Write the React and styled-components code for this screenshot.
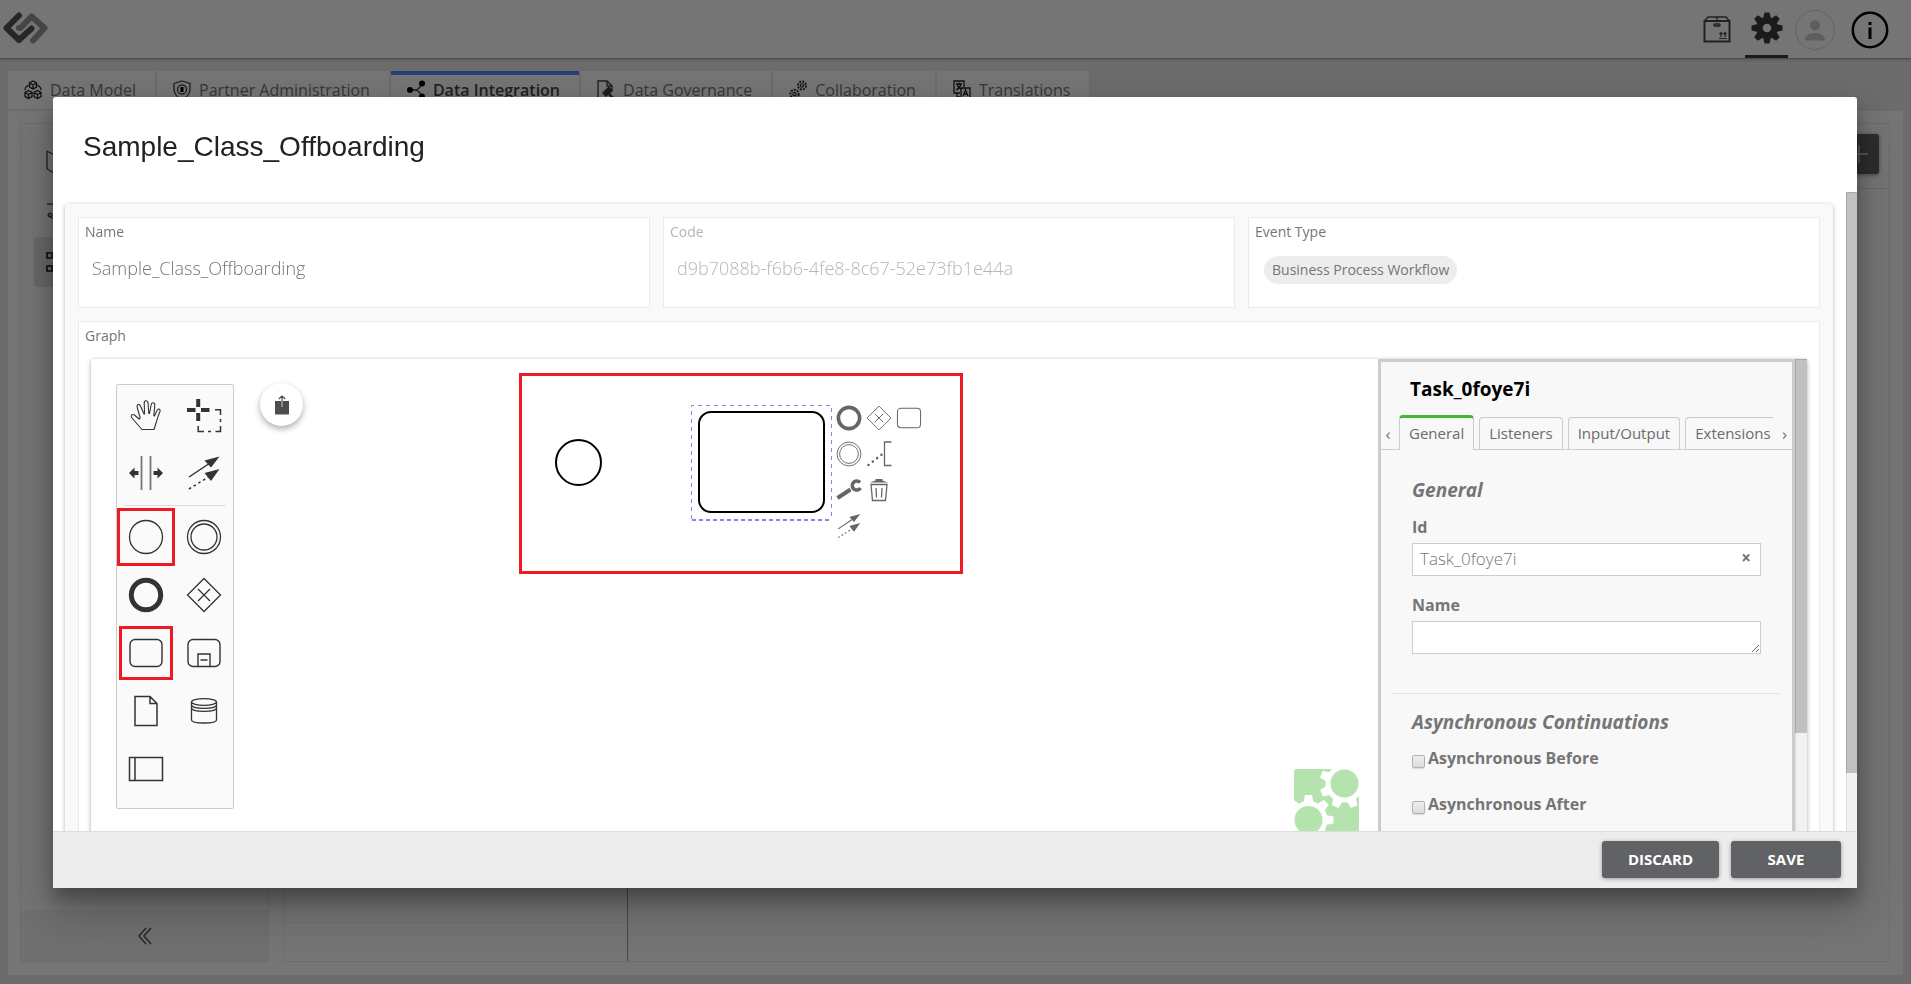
import React from "react";
import styled, { createGlobalStyle, css } from "styled-components";

const GlobalStyle = createGlobalStyle`
  *, *::before, *::after { box-sizing: border-box; }
  html, body { margin: 0; height: 100%; }
  body { background: #ebebeb; overflow: hidden; font-family: "Open Sans", "Noto Sans", sans-serif; color: #6b6b6b; }
  button, input, textarea { font: inherit; color: inherit; }
  svg { display: block; flex: none; }
`;

/* ---------- page behind the dialog ---------- */

const Page = styled.div`
  display: flex;
  flex-direction: column;
  min-height: 100vh;
`;

const Header = styled.header`
  display: flex;
  justify-content: space-between;
  height: 59px;
  background: #fff;
  border-bottom: 1px solid #aaa;
  box-shadow: 0 1px 3px rgba(0, 0, 0, 0.2);
  padding: 0 13px 0 2px;
`;

const Logo = styled.a`
  display: flex;
  align-items: center;
  height: 54px;
`;

const HeaderTools = styled.nav`
  display: flex;
  align-items: flex-start;
  gap: 7px;
`;

const HeaderButton = styled.button`
  display: flex;
  align-items: center;
  justify-content: center;
  width: ${(p) => p.$width || 43}px;
  height: 58px;
  padding: ${(p) => p.$drop || 0}px 0 0;
  background: none;
  border: 0;
  border-bottom: 3px solid ${(p) => (p.$active ? "#3a3a3a" : "transparent")};
`;

const TabBar = styled.nav`
  display: flex;
  gap: 2px;
  padding: 12px 8px 0;
`;

const PageTab = styled.a`
  display: flex;
  align-items: center;
  gap: 8px;
  height: 38px;
  padding: 0 19px 4px 16px;
  background: #fff;
  border-top: 4px solid ${(p) => (p.$active ? "#5389ff" : "transparent")};
  font-size: 16px;
  line-height: 22px;
  font-weight: ${(p) => (p.$active ? 600 : 400)};
  color: ${(p) => (p.$active ? "#444" : "#777")};
  text-decoration: none;
`;

const Workspace = styled.main`
  flex: 1;
  display: flex;
  gap: 14px;
  margin: 2px 8px 9px;
  padding: 12px 13px 13px 12px;
  background: #fff;
`;

const Sidebar = styled.aside`
  display: flex;
  flex-direction: column;
  width: 249px;
  border: 1px solid #ebebeb;
`;

const SideList = styled.div`
  flex: 1;
  display: flex;
  flex-direction: column;
  padding: 13px;
`;

const SideItem = styled.a`
  display: flex;
  align-items: center;
  height: 50px;
  padding-left: 12px;
  border-radius: 4px;
  background: ${(p) => (p.$active ? "#e4e4e4" : "transparent")};
`;

const Collapse = styled.button`
  display: flex;
  align-items: center;
  justify-content: center;
  height: 51px;
  border: 0;
  background: #f3f3f3;
`;

const Results = styled.section`
  flex: 1;
  display: flex;
  flex-direction: column;
  border: 1px solid #ebebeb;
`;

const ResultsBar = styled.div`
  display: flex;
  justify-content: flex-end;
  height: 65px;
  padding: 10px;
  border-bottom: 1px solid #e6e6e6;
`;

const AddButton = styled.button`
  display: flex;
  align-items: center;
  justify-content: center;
  width: 40px;
  height: 40px;
  border: 0;
  border-radius: 3px;
  background: #5f6064;
  box-shadow: 0 1px 4px rgba(0, 0, 0, 0.4);
`;

const ListPane = styled.div`
  flex: 1;
  display: flex;
  flex-direction: column;
  justify-content: flex-end;
  width: 344px;
  border-right: 1px solid #999;
`;

const ListFooter = styled.div`
  height: 39px;
  border-top: 1px solid #f3f3f3;
`;

/* ---------- dialog ---------- */

const Backdrop = styled.div`
  position: fixed;
  inset: 0;
  display: flex;
  padding: 97px 54px 96px 53px;
  background: rgba(0, 0, 0, 0.54);
`;

const Dialog = styled.section`
  flex: 1;
  display: flex;
  flex-direction: column;
  min-width: 0;
  background: #fff;
  border-radius: 3px 3px 0 0;
  box-shadow: 0 12px 18px rgba(0, 0, 0, 0.28), 0 20px 48px 8px rgba(0, 0, 0, 0.2);
`;

const DialogTitle = styled.h1`
  margin: 0;
  height: 95px;
  padding: 33px 30px 0;
  font-family: "Liberation Sans", Arial, sans-serif;
  font-size: 28px;
  line-height: 34px;
  font-weight: 400;
  color: #212121;
`;

const DialogBody = styled.div`
  flex: 1;
  display: flex;
  min-height: 0;
`;

const DialogContent = styled.div`
  flex: 1;
  min-width: 0;
  overflow: hidden;
  padding: 12px 13px 0 12px;
`;

const ScrollTrack = styled.div`
  flex: none;
  width: ${(p) => p.$width}px;
  background: #f1f1f1;
  border-left: 1px solid #ddd;
`;

const ScrollThumb = styled.div`
  height: ${(p) => p.$size};
  margin-left: -1px;
  background: #c1c1c1;
  border: solid #a8a8a8;
  border-width: 1px 0 0 1px;
`;

const Card = styled.div`
  display: grid;
  grid-template-columns: repeat(3, 1fr);
  gap: 13px;
  padding: 13px;
  background: #f9f9f9;
  border-radius: 4px;
  box-shadow: 0 1px 4px rgba(0, 0, 0, 0.3);
`;

const Field = styled.div`
  height: ${(p) => (p.$wide ? "720px" : "91px")};
  grid-column: ${(p) => (p.$wide ? "1 / -1" : "auto")};
  padding: 4px 12px 0;
  background: #fff;
  border: 1px solid #ebebeb;
  color: ${(p) => (p.$muted ? "#b5b5b5" : "#757575")};
`;

const FieldLabel = styled.label`
  display: block;
  margin-left: -6px;
  font-size: 14px;
  line-height: 20px;
`;

const FieldInput = styled.input`
  display: block;
  width: 100%;
  height: 30px;
  margin-top: 11px;
  padding: 0 1px;
  border: 0;
  outline: 0;
  background: none;
  font-size: 18px;
  line-height: 24px;
  font-weight: 300;
`;

const Chip = styled.span`
  display: inline-block;
  margin: 14px 0 0 3px;
  padding: 0 8px;
  border-radius: 14px;
  background: #ededed;
  color: #757575;
  font-size: 14px;
  line-height: 28px;
`;

const Modeler = styled.div`
  display: flex;
  height: 620px;
  margin-top: 13px;
  border-radius: 3px;
  box-shadow: 0 1px 4px rgba(0, 0, 0, 0.35);
`;

const Canvas = styled.div`
  flex: 1;
  position: relative;
  min-width: 0;
`;

const Palette = styled.div`
  position: absolute;
  left: 25px;
  top: 25px;
  display: grid;
  grid-template-columns: 58px 58px;
  grid-auto-rows: 58px;
  grid-template-rows: 58px 58px 6px;
  width: 118px;
  height: 425px;
  padding-top: 1px;
  background: #fafafa;
  border: 1px solid #ccc;
  border-radius: 2px;
`;

const PaletteEntry = styled.button`
  position: relative;
  display: flex;
  align-items: center;
  justify-content: center;
  padding: 0;
  border: 0;
  background: none;
`;

const Highlight = styled.span`
  position: absolute;
  inset: ${(p) => p.$inset}px;
  border: 3px solid #ed1c24;
`;

const Separator = styled.hr`
  grid-column: 1 / -1;
  width: 102px;
  height: 1px;
  margin: 3px auto 0;
  border: 0;
  background: #ddd;
`;

const ShareButton = styled.button`
  position: absolute;
  left: 169px;
  top: 24px;
  display: flex;
  align-items: center;
  justify-content: center;
  width: 43px;
  height: 43px;
  padding: 0;
  border: 0;
  border-radius: 50%;
  background: #fff;
  box-shadow: 0 3px 6px rgba(0, 0, 0, 0.32);
`;

const Diagram = styled.div`
  position: absolute;
  left: 428px;
  top: 14px;
  width: 444px;
  height: 201px;
  border: 3px solid #ed1c24;
`;

const ContextPad = styled.div`
  position: absolute;
  left: 312px;
  top: 24px;
  display: grid;
  grid-template-columns: repeat(3, 30px);
  grid-auto-rows: 36px;
`;

const PadButton = styled.button`
  display: flex;
  align-items: center;
  justify-content: center;
  grid-column: ${(p) => p.$col};
  grid-row: ${(p) => p.$row};
  padding: 0;
  border: 0;
  background: none;
`;

const Watermark = styled.div`
  position: absolute;
  right: 19px;
  top: 410px;
`;

const Properties = styled.aside`
  flex: none;
  width: 417px;
  border: 3px solid #ccc;
  background: #f8f8f8;
  overflow: hidden;
`;

const ElementName = styled.h2`
  margin: 0;
  padding: 14px 29px 0;
  font-size: 19px;
  line-height: 26px;
  font-weight: 700;
  color: #000;
`;

const PropTabs = styled.div`
  display: flex;
  align-items: flex-end;
  height: 35px;
  margin-top: 13px;
  box-shadow: inset 0 -1px #ccc;
`;

const TabArrow = styled.button`
  flex: none;
  width: ${(p) => (p.$next ? 19 : 18)}px;
  height: 32px;
  padding: ${(p) => (p.$next ? "0 0 0 4px" : "0 4px 0 0")};
  border: 0;
  background: none;
  font-size: 17px;
  line-height: 28px;
`;

const TabStrip = styled.div`
  flex: 1;
  display: flex;
  align-items: flex-end;
  gap: 5px;
  overflow: hidden;
`;

const PropTab = styled.a`
  flex: none;
  height: 33px;
  padding: 0 9px;
  border: 1px solid #ccc;
  border-bottom: 0;
  border-radius: 4px 4px 0 0;
  font-size: 15px;
  line-height: 30px;
  color: #6b6b6b;
  text-decoration: none;
  ${(p) =>
    p.$active &&
    css`
      height: 35px;
      border-top: 3px solid #44b534;
      background: #f8f8f8;
    `}
`;

const Group = styled.section`
  margin: 0 12px;
  padding: 0 19px;
  border-bottom: 1px dotted #ccc;
`;

const GroupTitle = styled.h3`
  margin: 0;
  padding-top: ${(p) => p.$top}px;
  font-size: 19px;
  line-height: 26px;
  font-weight: 700;
  font-style: italic;
`;

const PropLabel = styled.label`
  display: block;
  margin-top: ${(p) => p.$top}px;
  font-size: 16px;
  line-height: 22px;
  font-weight: 700;
`;

const InputWrap = styled.div`
  display: flex;
  align-items: center;
  height: 33px;
  margin-top: 5px;
  border: 1px solid #ccc;
  background: #fff;
`;

const PropInput = styled.input`
  flex: 1;
  min-width: 0;
  padding: 0 7px 2px;
  border: 0;
  outline: 0;
  background: none;
  font-size: 17px;
  line-height: 22px;
  font-weight: 300;
`;

const ClearButton = styled.button`
  width: 30px;
  padding: 0 0 4px 2px;
  border: 0;
  background: none;
  font-size: 17px;
  line-height: 22px;
  font-weight: 700;
`;

const PropTextarea = styled.textarea`
  display: block;
  width: 100%;
  height: 33px;
  margin: 5px 0 39px;
  padding: 4px 7px;
  border: 1px solid #ccc;
  border-radius: 0;
  background: #fff;
  font-size: 17px;
  resize: vertical;
  outline: 0;
`;

const CheckRow = styled.div`
  display: flex;
  gap: 3px;
  height: 22px;
  margin: ${(p) => p.$top}px 0 24px;
`;

const Checkbox = styled.input`
  appearance: none;
  width: 13px;
  height: 13px;
  margin: 8px 0 0;
  border: 1px solid #b2b2b2;
  border-radius: 2px;
  background: linear-gradient(#eee, #dcdcdc);
  box-shadow: 0 1px 1px rgba(0, 0, 0, 0.12);
`;

const CheckLabel = styled.label`
  font-size: 16px;
  line-height: 22px;
  font-weight: 700;
`;

const DialogFooter = styled.footer`
  flex: none;
  display: flex;
  justify-content: flex-end;
  gap: 12px;
  height: 57px;
  padding: 9px 16px 0;
  background: #ededed;
  border-top: 1px solid #ddd;
`;

const ActionButton = styled.button`
  width: ${(p) => p.$width}px;
  height: 37px;
  padding: 0 0 2px;
  border: 0;
  border-radius: 3px;
  background: #616266;
  box-shadow: 0 1px 4px rgba(0, 0, 0, 0.35);
  color: #fff;
  font-size: 15px;
  line-height: 20px;
  font-weight: 700;
`;

/* ---------- icons ---------- */

const Svg = ({ w = 18, h = w, box, sw = 1, color = "#333", children }) => (
  <svg
    width={w}
    height={h}
    viewBox={box || `0 0 ${w} ${h}`}
    fill="none"
    stroke={color}
    strokeWidth={sw}
    aria-hidden="true"
  >
    {children}
  </svg>
);

const LogoIcon = () => (
  <Svg w={48} h={34}>
    <g strokeWidth="6" strokeLinecap="round" strokeLinejoin="round">
      <path d="M17 18H18.500L29.500 6.500L42.500 18L31 30.500" stroke="#969696" />
      <path d="M17 5.500L4.500 18L17 30L29.500 18.500" stroke="#565656" />
    </g>
  </Svg>
);

const PackageIcon = () => (
  <Svg w={28} h={28} sw={2} color="#4a4a4a">
    <path d="M1.500 6H26.500V26.500H1.500Z" />
    <path d="M1.500 6L5 2H23L26.500 6M14 2V6" strokeWidth="1.500" />
    <rect x="11" y="9" width="6" height="2" rx="1" strokeWidth="1.500" />
    <path d="M16 23.500h8M18 22v-4.500M22 22v-4.500M16.500 19l1.500-1.500 1.500 1.500M20.500 19l1.500-1.500 1.500 1.500" strokeWidth="1.200" />
  </Svg>
);

const GearIcon = () => (
  <Svg w={32} h={32} color="none">
    <g fill="#3b3b3b">
      {[0, 45, 90, 135, 180, 225, 270, 315].map((a) => (
        <path key={a} d="M12 7L13.500 .5h5L20 7Z" transform={`rotate(${a} 16 16)`} />
      ))}
    </g>
    <circle cx="16" cy="16" r="7.500" stroke="#3b3b3b" strokeWidth="6.500" />
  </Svg>
);

const AvatarIcon = () => (
  <Svg w={40} h={40}>
    <circle cx="20" cy="20" r="19.500" stroke="#d7d7d7" />
    <g fill="#cacaca" stroke="none">
      <circle cx="20" cy="15.500" r="5" />
      <path d="M10 30.500v-1c0-4 5-6.500 10-6.500s10 2.500 10 6.500v1Z" />
    </g>
  </Svg>
);

const InfoIcon = () => (
  <Svg w={38} h={38} color="#000">
    <circle cx="19" cy="19" r="17.200" strokeWidth="2.500" />
    <path d="M19 11v3M19 16.500v11.500" strokeWidth="3" />
  </Svg>
);

const cube = "M0-4L3.500-2V2L0 4L-3.500 2V-2ZM-3.500-2L0 0L3.500-2M0 0V4";

const ModelIcon = () => (
  <Svg w={18} h={20} box="1 0 18 20" color="#222" sw={1.300}>
    <path d={cube} transform="translate(10 5)" />
    <path d={cube} transform="translate(5.500 14.500)" />
    <path d={cube} transform="translate(14.500 14.500)" />
    <path d="M5.500 5Q2 7 2 10M14.500 5Q18 7 18 10" />
  </Svg>
);

const ShieldIcon = () => (
  <Svg w={18} h={20} color="#444" sw={1.300}>
    <path d="M9 1L17 3.500V9c0 5-3.500 8.500-8 10.500C4.500 17.500 1 14 1 9V3.500Z" />
    <circle cx="9" cy="9.500" r="4.500" />
    <path d="M9 7v5" stroke="#000" strokeWidth="3" />
  </Svg>
);

const NodesIcon = () => (
  <Svg w={18} h={20} box="1 0 18 20" color="#333" sw={1.300}>
    <path d="M3 10H10M10 10Q13 9 16 4M10 10Q13 11 16 16" />
    <g fill="#000" stroke="none">
      <circle cx="4" cy="10" r="3" />
      <circle cx="16" cy="3.500" r="3" />
      <circle cx="16" cy="16.500" r="3" />
    </g>
  </Svg>
);

const GovernanceIcon = () => (
  <Svg w={18} h={20} color="#444" sw={1.400}>
    <path d="M6 19H1V1h9l5 5v5M10 1v5h5" />
    <path d="M6 13l6-6 3 4-6 5Z" fill="#444" />
    <path d="M12 14l5 5" strokeWidth="2.500" />
  </Svg>
);

const GearsIcon = () => (
  <Svg w={18} h={20} color="#333" sw={1.200}>
    <circle cx="13" cy="5.500" r="4" strokeDasharray="2 1.100" strokeWidth="2" />
    <circle cx="13" cy="5.500" r="1.600" />
    <circle cx="5.500" cy="14" r="4.200" strokeDasharray="2 1.100" strokeWidth="2" />
    <circle cx="5.500" cy="14" r="1.600" />
  </Svg>
);

const TranslateIcon = () => (
  <Svg w={18} h={20} color="#222" sw={1.300}>
    <path d="M7 13H1V1h10v6M3 4h6M6 2.500V4M8 4q-1 4-5 6M4 4q1 4 5 5" />
    <path d="M8 8h9v11H8ZM10 16l2.500-6L15 16M11 14h3M4 13v4h3" />
  </Svg>
);

const Plus = () => (
  <Svg w={20} color="#cfcfcf" sw={1.500}>
    <path d="M10 1V19M1 10H19" />
  </Svg>
);

const CollapseIcon = () => (
  <Svg w={16} h={18} color="#555" sw={1.500}>
    <path d="M9 1L2 9L9 17M14 1L7 9L14 17" />
  </Svg>
);

const MapIcon = () => (
  <Svg w={24} h={24} color="#111">
    <path d="M1 1l7 4 8-4 7 4v18l-7-4-8 4-7-4ZM8 5v18" />
  </Svg>
);

const FlowIcon = () => (
  <Svg w={24} h={24} color="#111">
    <path d="M1 4h5l4 3M2 14l7 7" />
    <circle cx="4" cy="15" r="2" />
  </Svg>
);

const GridIcon = () => (
  <Svg w={24} h={24} color="#111" sw={1.500}>
    <rect x="1" y="3" width="5" height="5" />
    <rect x="1" y="16" width="5" height="5" />
    <rect x="12" y="3" width="5" height="5" />
  </Svg>
);

const HandIcon = () => (
  <Svg w={36} h={36} sw={1.100}>
    <path
      strokeLinejoin="round"
      d="M14 32.500H26L28 26Q30 19 32 14.500Q32.500 12.300 30.800 12Q29.500 12 29 13.500L26.500 19L25.800 18.500L26.800 8Q26.800 5.700 25 5.700Q23.500 5.700 23.200 7.500L21.500 16.500H20.800L20 5.500Q19.500 3.700 18 3.700Q16.200 3.700 16.200 6L16.600 17L16 17L12.500 9Q11.500 7 10 7.500Q8.500 8.300 9.200 10.500L12.200 21L11 22L6.500 18Q5 17 3.600 18Q2.500 19.300 4 21L10 28Z"
    />
  </Svg>
);

const LassoIcon = () => (
  <Svg w={36} h={36}>
    <path d="M1 13H9.500M15 13H23.500M12.200 2V10M12.200 16V24" strokeWidth="4" />
    <path d="M29 12.700H34.500V18M34.500 22V25M34.500 29V34.500H29.500M25 34.500H22M18 34.500H12.200V29" strokeWidth="1.500" />
  </Svg>
);

const SpaceIcon = () => (
  <Svg w={36} h={36}>
    <path d="M13.500 1V35M22.500 1V35" stroke="#777" strokeWidth="1.800" />
    <path d="M1 18L6.500 12.500V16H10.500V20H6.500V23.500ZM35 18L29.500 12.500V16H25.500V20H29.500V23.500Z" fill="#333" stroke="none" />
  </Svg>
);

const ConnectIcon = ({ size = 36, color = "#333" }) => (
  <Svg w={size} h={size} box="0 0 36 36" color={color} sw={1.500}>
    <path d="M3 22L24 8" />
    <path d="M3 34L24 21" strokeDasharray="2.500 3" />
    <path d="M33.500 1.500L25 12.500L18.500 5.500ZM33.500 14L25 26L18.500 18Z" fill={color} stroke="none" />
  </Svg>
);

const Ring = ({ size = 36, kind, color = "#333", line = 1.300 }) => (
  <Svg w={size} h={size} box="0 0 36 36" color={color} sw={line}>
    {kind === "end" ? (
      <circle cx="18" cy="18" r="14.700" strokeWidth="5" />
    ) : (
      <circle cx="18" cy="18" r="16.500" />
    )}
    {kind === "double" && <circle cx="18" cy="18" r="13" />}
  </Svg>
);

const Gateway = ({ size = 36, color = "#333", line = 1.300 }) => (
  <Svg w={size} h={size} box="0 0 36 36" color={color} sw={line}>
    <path d="M18 1.500L34.500 18L18 34.500L1.500 18ZM12 12L24 24M24 12L12 24" />
  </Svg>
);

const TaskIcon = ({ size = 36, sub, color = "#333", line = 1.400 }) => (
  <Svg w={size} h={size} box="0 0 36 36" color={color} sw={line}>
    <rect x="2" y="4.500" width="32" height="27" rx="5" />
    {sub && <path d="M12 31.500V19H24V31.500M14.500 25H21.500" />}
  </Svg>
);

const DataObject = () => (
  <Svg w={36} h={36} sw={1.500}>
    <path d="M7 3.500H22L29 10.500V32.500H7ZM22 3.500V10.500H29" />
  </Svg>
);

const DataStore = () => (
  <Svg w={36} h={36} sw={1.300}>
    <ellipse cx="18" cy="9" rx="12.500" ry="3.300" />
    <path d="M5.500 9V27C5.500 31 30.500 31 30.500 27V9M5.500 12C5.500 16.500 30.500 16.500 30.500 12M5.500 15C5.500 19.500 30.500 19.500 30.500 15" />
  </Svg>
);

const Pool = () => (
  <Svg w={36} h={36} sw={1.500}>
    <path d="M1.500 6.500H34.500V29.500H1.500ZM7 6.500V29.500" />
  </Svg>
);

const ShareIcon = () => (
  <Svg w={16} h={20}>
    <path d="M1 6H15V19.500H1Z" fill="#4d4d4d" stroke="none" />
    <path d="M8 12V6" stroke="#ccc" />
    <path d="M8 6V1M4.800 4L8 1L11.200 4" stroke="#4d4d4d" strokeWidth="1.200" />
  </Svg>
);

const AnnotationIcon = () => (
  <Svg w={26} h={26} color="#666" sw={1.300}>
    <path d="M25.500 1H18.500V24.500H25.500" />
    <path d="M2.500 24L17 12.500" strokeWidth="2.600" strokeLinecap="round" strokeDasharray="0 5.500" />
  </Svg>
);

const WrenchIcon = () => (
  <Svg w={26} h={26} color="#666">
    <path d="M1.500 21L14.500 12.500" strokeWidth="4" />
    <path d="M24 5.500A4.500 4.500 0 1 0 24.500 11" strokeWidth="3.500" />
  </Svg>
);

const TrashIcon = () => (
  <Svg w={26} h={26} color="#666" sw={1.300}>
    <path d="M5 7.500H21L19.500 23.500H6.500ZM10 11L10.500 20.500M16 11L15.500 20.500" />
    <path d="M4 5.500L9.500 3.500V2H16.500V3.500L22 5.500Z" fill="#666" stroke="none" />
  </Svg>
);

const Shapes = () => (
  <Svg w={438} h={195} color="#000" sw={2}>
    <circle cx="56.500" cy="86.500" r="22.500" />
    <rect x="177" y="36" width="125" height="100" rx="12" />
    <path d="M169.500 143V29.500H309.500V143" stroke="#8b7cf8" strokeWidth="1" strokeDasharray="4 4" />
    <path d="M170 144H310" stroke="#8b7cf8" strokeWidth="2" strokeDasharray="4 3" />
  </Svg>
);

const Teeth = ({ x, y, turn }) =>
  [0, 1, 2, 3, 4, 5, 6, 7].map((i) => (
    <path
      key={i}
      d="M-5-17L-3.500-25H3.500L5-17Z"
      transform={`translate(${x} ${y}) rotate(${i * 45 + turn})`}
      fill="#fff"
    />
  ));

const WatermarkIcon = () => (
  <Svg w={65} h={65} color="none">
    <rect width="65" height="65" rx="3" fill="#b5e3ad" />
    <circle cx="50.500" cy="14.500" r="19" fill="#fff" />
    <Teeth x={50.500} y={14.500} turn={22} />
    <circle cx="14.500" cy="51" r="19" fill="#fff" />
    <Teeth x={14.500} y={51} turn={0} />
    <circle cx="50.500" cy="14.500" r="14" fill="#b5e3ad" />
    <circle cx="14.500" cy="51" r="14" fill="#b5e3ad" />
  </Svg>
);

/* ---------- data ---------- */

const pageTabs = [
  ["Data Model", ModelIcon],
  ["Partner Administration", ShieldIcon],
  ["Data Integration", NodesIcon],
  ["Data Governance", GovernanceIcon],
  ["Collaboration", GearsIcon],
  ["Translations", TranslateIcon],
];

const tools = [
  ["Hand tool", <HandIcon />],
  ["Lasso tool", <LassoIcon />],
  ["Space tool", <SpaceIcon />],
  ["Connect tool", <ConnectIcon />],
];

const elements = [
  ["Start event", <Ring />, 0],
  ["Intermediate event", <Ring kind="double" />],
  ["End event", <Ring kind="end" />],
  ["Gateway", <Gateway />],
  ["Task", <TaskIcon />, 2],
  ["Sub process", <TaskIcon sub />],
  ["Data object", <DataObject />],
  ["Data store", <DataStore />],
  ["Pool", <Pool />],
];

const pad = { size: 26, color: "#666" };
const padEntries = [
  ["Append end event", 1, 1, <Ring {...pad} kind="end" />],
  ["Append gateway", 2, 1, <Gateway {...pad} />],
  ["Append task", 3, 1, <TaskIcon {...pad} />],
  ["Append intermediate event", 1, 2, <Ring {...pad} kind="double" />],
  ["Append annotation", 2, 2, <AnnotationIcon />],
  ["Change type", 1, 3, <WrenchIcon />],
  ["Remove", 2, 3, <TrashIcon />],
  ["Connect", 1, 4, <ConnectIcon {...pad} />],
];

export default function App() {
  return (
    <>
      <GlobalStyle />
      <Page>
        <Header>
          <Logo href="#" aria-label="Home"><LogoIcon /></Logo>
          <HeaderTools>
            <HeaderButton aria-label="Packages" $drop={2}><PackageIcon /></HeaderButton>
            <HeaderButton aria-label="Settings" $active><GearIcon /></HeaderButton>
            <HeaderButton aria-label="Account" $width={40} $drop={4}><AvatarIcon /></HeaderButton>
            <HeaderButton aria-label="Information" $width={56} $drop={4}><InfoIcon /></HeaderButton>
          </HeaderTools>
        </Header>
        <TabBar>
          {pageTabs.map(([name, Icon]) => (
            <PageTab key={name} href="#" $active={name === "Data Integration"}>
              <Icon />
              {name}
            </PageTab>
          ))}
        </TabBar>
        <Workspace>
          <Sidebar>
            <SideList>
              <SideItem href="#" aria-label="Mappings"><MapIcon /></SideItem>
              <SideItem href="#" aria-label="Endpoints"><FlowIcon /></SideItem>
              <SideItem href="#" aria-label="Workflows" $active><GridIcon /></SideItem>
            </SideList>
            <Collapse aria-label="Collapse"><CollapseIcon /></Collapse>
          </Sidebar>
          <Results>
            <ResultsBar>
              <AddButton aria-label="Add"><Plus /></AddButton>
            </ResultsBar>
            <ListPane><ListFooter /></ListPane>
          </Results>
        </Workspace>
      </Page>

      <Backdrop>
        <Dialog role="dialog" aria-labelledby="dialog-title">
          <DialogTitle id="dialog-title">Sample_Class_Offboarding</DialogTitle>
          <DialogBody>
            <DialogContent>
              <Card>
                <Field>
                  <FieldLabel htmlFor="name">Name</FieldLabel>
                  <FieldInput id="name" defaultValue="Sample_Class_Offboarding" />
                </Field>
                <Field $muted>
                  <FieldLabel htmlFor="code">Code</FieldLabel>
                  <FieldInput id="code" readOnly value="d9b7088b-f6b6-4fe8-8c67-52e73fb1e44a" />
                </Field>
                <Field>
                  <FieldLabel as="div">Event Type</FieldLabel>
                  <Chip>Business Process Workflow</Chip>
                </Field>
                <Field $wide>
                  <FieldLabel as="div">Graph</FieldLabel>
                  <Modeler>
                    <Canvas>
                      <Palette>
                        {tools.map(([name, icon]) => (
                          <PaletteEntry key={name} aria-label={name}>{icon}</PaletteEntry>
                        ))}
                        <Separator />
                        {elements.map(([name, icon, inset]) => (
                          <PaletteEntry key={name} aria-label={name}>
                            {icon}
                            {inset !== undefined && <Highlight $inset={inset} />}
                          </PaletteEntry>
                        ))}
                      </Palette>
                      <ShareButton aria-label="Export"><ShareIcon /></ShareButton>
                      <Diagram>
                        <Shapes />
                        <ContextPad>
                          {padEntries.map(([name, col, row, icon]) => (
                            <PadButton key={name} aria-label={name} $col={col} $row={row}>
                              {icon}
                            </PadButton>
                          ))}
                        </ContextPad>
                      </Diagram>
                      <Watermark><WatermarkIcon /></Watermark>
                    </Canvas>
                    <Properties>
                      <ElementName>Task_0foye7i</ElementName>
                      <PropTabs>
                        <TabArrow aria-label="Previous tabs">‹</TabArrow>
                        <TabStrip>
                          <PropTab href="#" $active>General</PropTab>
                          <PropTab href="#">Listeners</PropTab>
                          <PropTab href="#">Input/Output</PropTab>
                          <PropTab href="#">Extensions</PropTab>
                        </TabStrip>
                        <TabArrow $next aria-label="Next tabs">›</TabArrow>
                      </PropTabs>
                      <Group>
                        <GroupTitle $top={27}>General</GroupTitle>
                        <PropLabel htmlFor="task-id" $top={13}>Id</PropLabel>
                        <InputWrap>
                          <PropInput id="task-id" defaultValue="Task_0foye7i" />
                          <ClearButton aria-label="Clear">×</ClearButton>
                        </InputWrap>
                        <PropLabel htmlFor="task-name" $top={18}>Name</PropLabel>
                        <PropTextarea id="task-name" rows={1} />
                      </Group>
                      <Group>
                        <GroupTitle $top={15}>Asynchronous Continuations</GroupTitle>
                        <CheckRow $top={12}>
                          <Checkbox type="checkbox" id="async-before" />
                          <CheckLabel htmlFor="async-before">Asynchronous Before</CheckLabel>
                        </CheckRow>
                        <CheckRow $top={0}>
                          <Checkbox type="checkbox" id="async-after" />
                          <CheckLabel htmlFor="async-after">Asynchronous After</CheckLabel>
                        </CheckRow>
                      </Group>
                    </Properties>
                    <ScrollTrack $width={12}>
                      <ScrollThumb $size="374px" />
                    </ScrollTrack>
                  </Modeler>
                </Field>
              </Card>
            </DialogContent>
            <ScrollTrack $width={11}>
              <ScrollThumb $size="91%" />
            </ScrollTrack>
          </DialogBody>
          <DialogFooter>
            <ActionButton $width={117}>DISCARD</ActionButton>
            <ActionButton $width={110}>SAVE</ActionButton>
          </DialogFooter>
        </Dialog>
      </Backdrop>
    </>
  );
}
